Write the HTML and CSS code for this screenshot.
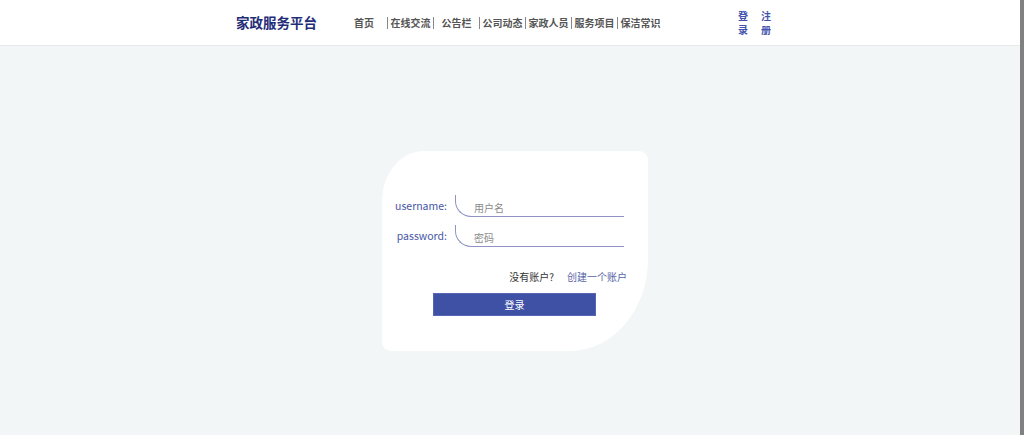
FILE: index.html
```html
<!DOCTYPE html>
<html lang="zh-CN">
<head>
    <meta charset="UTF-8">
    <meta name="viewport" content="width=device-width, initial-scale=1.0">
    <title>家政服务平台 - 登录</title>
    <link rel="stylesheet" href="styles.css">
</head>
<body>

    <div class="header">
        <div class="header-inner">
            <div class="logo">家政服务平台</div>
            <ul class="nav">
                <li>首页</li>
                <li>在线交流</li>
                <li>公告栏</li>
                <li>公司动态</li>
                <li>家政人员</li>
                <li>服务项目</li>
                <li>保洁常识</li>
            </ul>
            <div class="user-links">
                <a href="#">登录</a>
                <a href="#">注册</a>
            </div>
        </div>
    </div>

    <div class="main">
        <form class="login-card">
            <div class="row">
                <label>username:</label>
                <input type="text" placeholder="用户名">
            </div>
            <div class="row">
                <label>password:</label>
                <input type="password" placeholder="密码">
            </div>
            <div class="register">
                <span>没有账户?</span>
                <a href="#">创建一个账户</a>
            </div>
            <button type="button" class="btn-login">登录</button>
        </form>
    </div>

    <!-- scrollbar strip -->
    <div class="scroll-strip"></div>

</body>
</html>
```

FILE: styles.css
```css
* {
    box-sizing: border-box;
}

body {
    margin: 0;
    background-color: #f3f6f7;
    font-family: "Noto Sans CJK SC", "Noto Sans", sans-serif;
    color: #333;
    height: 435px;
    overflow: hidden;
}

/* Header */
.header {
    height: 46px;
    background-color: #fff;
    border-bottom: 1px solid #e6e8ea;
    width: 1020px;
}

.header-inner {
    display: flex;
    align-items: center;
    height: 45px;
    padding-left: 236px;
}

.logo {
    font-size: 13.5px;
    font-weight: bold;
    color: #1f2c78;
    width: 105px;
    margin-top: -2px;
}

.nav {
    display: flex;
    list-style: none;
    margin: 0;
    padding: 0;
}

.nav li {
    width: 46px;
    text-align: center;
    font-size: 10px;
    font-weight: 600;
    color: #555;
    line-height: 12px;
    border-left: 1px solid #888;
}

.nav li:first-child {
    border-left: none;
}

.user-links {
    display: flex;
    gap: 13px;
    margin-left: 75px;
    margin-top: 1px;
}

.user-links a {
    width: 10px;
    font-size: 10px;
    font-weight: 600;
    line-height: 14px;
    color: #4353ad;
    text-decoration: none;
    word-break: break-all;
}

/* Login card */
.main {
    display: flex;
    justify-content: center;
    width: 1020px;
    padding-top: 105px;
    padding-left: 10px;
}

.login-card {
    width: 266px;
    height: 200px;
    background-color: #fff;
    border-radius: 42px 9px 78px 9px / 50px 9px 92px 9px;
    padding-top: 44px;
}

.row {
    display: flex;
    align-items: flex-end;
    height: 22px;
    margin-bottom: 8px;
}

.row label {
    width: 65px;
    text-align: right;
    font-size: 10.5px;
    color: #4656a6;
    padding-bottom: 4px;
}

.row input {
    margin-left: 8px;
    width: 169px;
    height: 22px;
    border: none;
    border-left: 1px solid #8f93c4;
    border-bottom: 1px solid #8f93c4;
    border-bottom-left-radius: 16px;
    padding: 3px 0 0 18px;
    font-family: inherit;
    font-size: 10px;
    outline: none;
    background: transparent;
}

.row input::placeholder {
    color: #8a8a8a;
}

.register {
    display: flex;
    justify-content: flex-end;
    gap: 13px;
    padding-right: 21px;
    margin-top: 23px;
    font-size: 10px;
    line-height: 14px;
}

.register a {
    color: #5866a8;
    text-decoration: none;
}

.btn-login {
    display: block;
    width: 163px;
    height: 23px;
    margin: 9px 0 0 51px;
    border: 1px solid #5666b4;
    background-color: #3f51a5;
    color: #fff;
    font-family: inherit;
    font-size: 10px;
    padding: 0;
}

.scroll-strip {
    position: fixed;
    top: 0;
    right: 0;
    width: 4px;
    height: 100%;
    background-color: #808080;
}
```
